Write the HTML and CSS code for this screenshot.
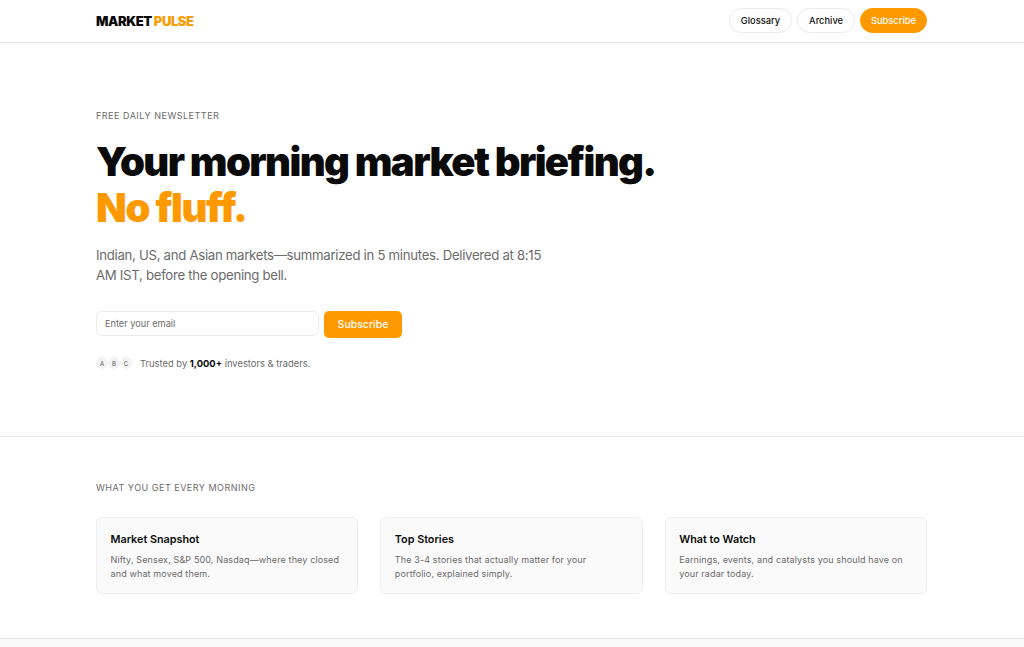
FILE: index.html
```html
<!DOCTYPE html>
<html lang="en">
<head>
  <meta charset="UTF-8" />
  <title>Market Pulse</title>
  <link rel="stylesheet" href="styles.css">
</head>
<body>

  <!-- HEADER -->
  <header class="topo">
    <div class="wrap topo-linha">
      <a class="logo" href="#">MARKET <span>PULSE</span></a>
      <nav class="menu">
        <a class="pill" href="#">Glossary</a>
        <a class="pill" href="#">Archive</a>
        <a class="pill pill-laranja" href="#">Subscribe</a>
      </nav>
    </div>
  </header>

  <!-- HERO -->
  <section class="hero">
    <div class="wrap">
      <p class="rotulo">FREE DAILY NEWSLETTER</p>
      <h1>Your morning market briefing.<br><span>No fluff.</span></h1>
      <p class="sub">Indian, US, and Asian markets—summarized in 5 minutes. Delivered at 8:15 AM IST, before the opening bell.</p>
      <form class="form">
        <input type="email" placeholder="Enter your email" />
        <button type="button">Subscribe</button>
      </form>
      <div class="prova">
        <div class="avatares"><span>A</span><span>B</span><span>C</span></div>
        <p>Trusted by <strong>1,000+</strong> investors &amp; traders.</p>
      </div>
    </div>
  </section>

  <!-- FEATURES -->
  <section class="extras">
    <div class="wrap">
      <p class="rotulo">WHAT YOU GET EVERY MORNING</p>
      <div class="cards">
        <div class="card">
          <h3>Market Snapshot</h3>
          <p>Nifty, Sensex, S&amp;P 500, Nasdaq—where they closed and what moved them.</p>
        </div>
        <div class="card">
          <h3>Top Stories</h3>
          <p>The 3-4 stories that actually matter for your portfolio, explained simply.</p>
        </div>
        <div class="card">
          <h3>What to Watch</h3>
          <p>Earnings, events, and catalysts you should have on your radar today.</p>
        </div>
      </div>
    </div>
  </section>

  <div class="fim"></div>

</body>
</html>
```

FILE: styles.css
```css
* {
  box-sizing: border-box;
}
html, body {
  height: 100%;
}
body {
  margin: 0;
  font-family: 'Inter', sans-serif;
  background: #fff;
  color: #0a0a0a;
  overflow: hidden;
}
.wrap {
  width: 832px;
  margin: 0 auto;
}
.topo {
  border-bottom: 1px solid #ebebeb;
  height: 43px;
}
.topo-linha {
  display: flex;
  justify-content: space-between;
  align-items: center;
  height: 41px;
  padding-right: 1px;
}
.logo {
  font-size: 13px;
  font-weight: 900;
  letter-spacing: -0.42px;
  color: #0a0a0a;
  text-decoration: none;
}
.logo span {
  color: #f59e0b;
}
.menu {
  display: flex;
  gap: 5px;
}
.pill {
  height: 25px;
  padding: 0 11px;
  display: flex;
  align-items: center;
  border: 1px solid #ebebeb;
  border-radius: 13px;
  font-size: 9.3px;
  font-weight: 500;
  color: #111;
  text-decoration: none;
}
.pill-laranja {
  padding: 0 10px;
  background: #ff9900;
  border-color: #ff9900;
  color: #fff;
}
.hero {
  height: 394px;
  padding-top: 67px;
  border-bottom: 1px solid #ebebeb;
}
.rotulo {
  margin: 0;
  font-size: 9px;
  line-height: 12px;
  letter-spacing: 0.5px;
  color: #6b6b6b;
}
h1 {
  margin: 17px 0 0;
  font-size: 40px;
  line-height: 46px;
  font-weight: 900;
  letter-spacing: -1.6px;
  color: #0a0a0a;
}
h1 span {
  color: #ff9900;
  letter-spacing: -1.4px;
}
.sub {
  margin: 15px 0 0;
  width: 450px;
  font-size: 13.2px;
  line-height: 19.5px;
  letter-spacing: -0.29px;
  color: #6b6b6b;
}
.form {
  display: flex;
  align-items: flex-start;
  gap: 5px;
  margin-top: 26px;
}
.form input {
  width: 223px;
  height: 25px;
  padding: 0 8px;
  border: 1px solid #ebebeb;
  border-radius: 6px;
  font-family: inherit;
  font-size: 9.2px;
}
.form input::placeholder {
  color: #6b6b6b;
}
.form button {
  width: 78px;
  height: 27px;
  background: #ff9900;
  color: #fff;
  border: none;
  border-radius: 5px;
  font-family: inherit;
  font-size: 10.5px;
  font-weight: 500;
}
.prova {
  display: flex;
  align-items: center;
  gap: 8px;
  margin-top: 19px;
}
.avatares {
  display: flex;
}
.avatares span {
  width: 12px;
  height: 12px;
  border-radius: 50%;
  background: #f3f3f3;
  display: flex;
  align-items: center;
  justify-content: center;
  font-size: 6px;
  color: #555;
}
.prova p {
  margin: 0;
  font-size: 9.4px;
  color: #6b6b6b;
}
.prova strong {
  color: #0a0a0a;
  font-weight: 700;
}
.extras {
  height: 202px;
  padding-top: 45px;
  border-bottom: 1px solid #e5e5e5;
}
.cards {
  display: grid;
  grid-template-columns: repeat(3, 1fr);
  gap: 22px;
  margin-top: 23px;
  padding-right: 1px;
}
.card {
  height: 77px;
  padding: 15px 15px 15px 13.5px;
  background: #fafafa;
  border: 1px solid #efefef;
  border-radius: 6px;
}
.card h3 {
  margin: 0;
  font-size: 10.8px;
  line-height: 14px;
  font-weight: 600;
  color: #0a0a0a;
}
.card p {
  margin: 6px 0 0;
  font-size: 9px;
  line-height: 14px;
  letter-spacing: 0.13px;
  color: #6b6b6b;
}
.fim {
  height: 8px;
  background: #fafafa;
}
```
